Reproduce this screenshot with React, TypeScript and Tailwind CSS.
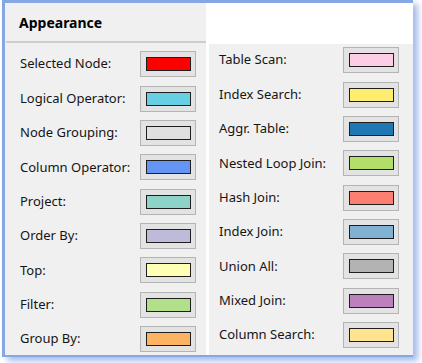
const left = [
  { label: "Selected Node:", color: "bg-[#ff0000]" },
  { label: "Logical Operator:", color: "bg-[#66cfe2]" },
  { label: "Node Grouping:", color: "bg-[#e0e0e0]" },
  { label: "Column Operator:", color: "bg-[#6495f5]" },
  { label: "Project:", color: "bg-[#8dd3c7]" },
  { label: "Order By:", color: "bg-[#bebada]" },
  { label: "Top:", color: "bg-[#ffffb3]" },
  { label: "Filter:", color: "bg-[#b2df8a]" },
  { label: "Group By:", color: "bg-[#fdb462]" },
];

const right = [
  { label: "Table Scan:", color: "bg-[#fccde5]" },
  { label: "Index Search:", color: "bg-[#ffed6f]" },
  { label: "Aggr. Table:", color: "bg-[#1f78b4]" },
  { label: "Nested Loop Join:", color: "bg-[#b3de69]" },
  { label: "Hash Join:", color: "bg-[#fb8072]" },
  { label: "Index Join:", color: "bg-[#80b1d3]" },
  { label: "Union All:", color: "bg-[#b3b3b3]" },
  { label: "Mixed Join:", color: "bg-[#bc80bd]" },
  { label: "Column Search:", color: "bg-[#ffe38f]" },
];

function ColorButton({ color }: { color: string }) {
  return (
    <div className="flex h-[26px] w-[56px] items-center justify-center border border-[#b4b4b4] bg-[#e3e3e3]">
      <div className={`h-[14px] w-[45px] border border-[#1e1e1e] ${color}`} />
    </div>
  );
}

function Row({ label, color, pad }: { label: string; color: string; pad: string }) {
  return (
    <div className={`flex h-[34.375px] shrink-0 items-center justify-between ${pad}`}>
      <span>{label}</span>
      <ColorButton color={color} />
    </div>
  );
}

export default function App() {
  return (
    <div
      className="h-[363px] w-[422px] bg-white pl-[2px] text-[13px] text-[#151515]"
      style={{ fontFamily: '"Noto Sans", sans-serif' }}
    >
      <div className="flex h-[357px] w-[411px] border-[3px] border-b-2 border-r-0 border-[#86a6e4] bg-white shadow-[5px_4px_6px_rgba(95,135,220,0.55)]">
        {/* Left column */}
        <div className="flex w-[201px] flex-col overflow-hidden bg-[#f0f0f0] pl-[1px]">
          <div className="flex h-[38px] shrink-0 items-center pl-[13px] text-[14px] font-bold text-black">
            Appearance
          </div>
          <div className="h-[2px] shrink-0 bg-[#cdcdcd]" />
          <div className="shrink-0 pt-[4px]">
            {left.map((r) => (
              <Row key={r.label} label={r.label} color={r.color} pad="pl-[14px] pr-[10px]" />
            ))}
          </div>
        </div>

        {/* Right column */}
        <div className="ml-[3px] flex flex-1 flex-col overflow-hidden">
          <div className="h-[41px] shrink-0 bg-white" />
          <div className="min-h-0 flex-1 bg-[#f0f0f0]">
            <div className="-mt-px">
              {right.map((r) => (
                <Row key={r.label} label={r.label} color={r.color} pad="pl-[10px] pr-[14px]" />
              ))}
            </div>
          </div>
        </div>
      </div>
    </div>
  );
}
